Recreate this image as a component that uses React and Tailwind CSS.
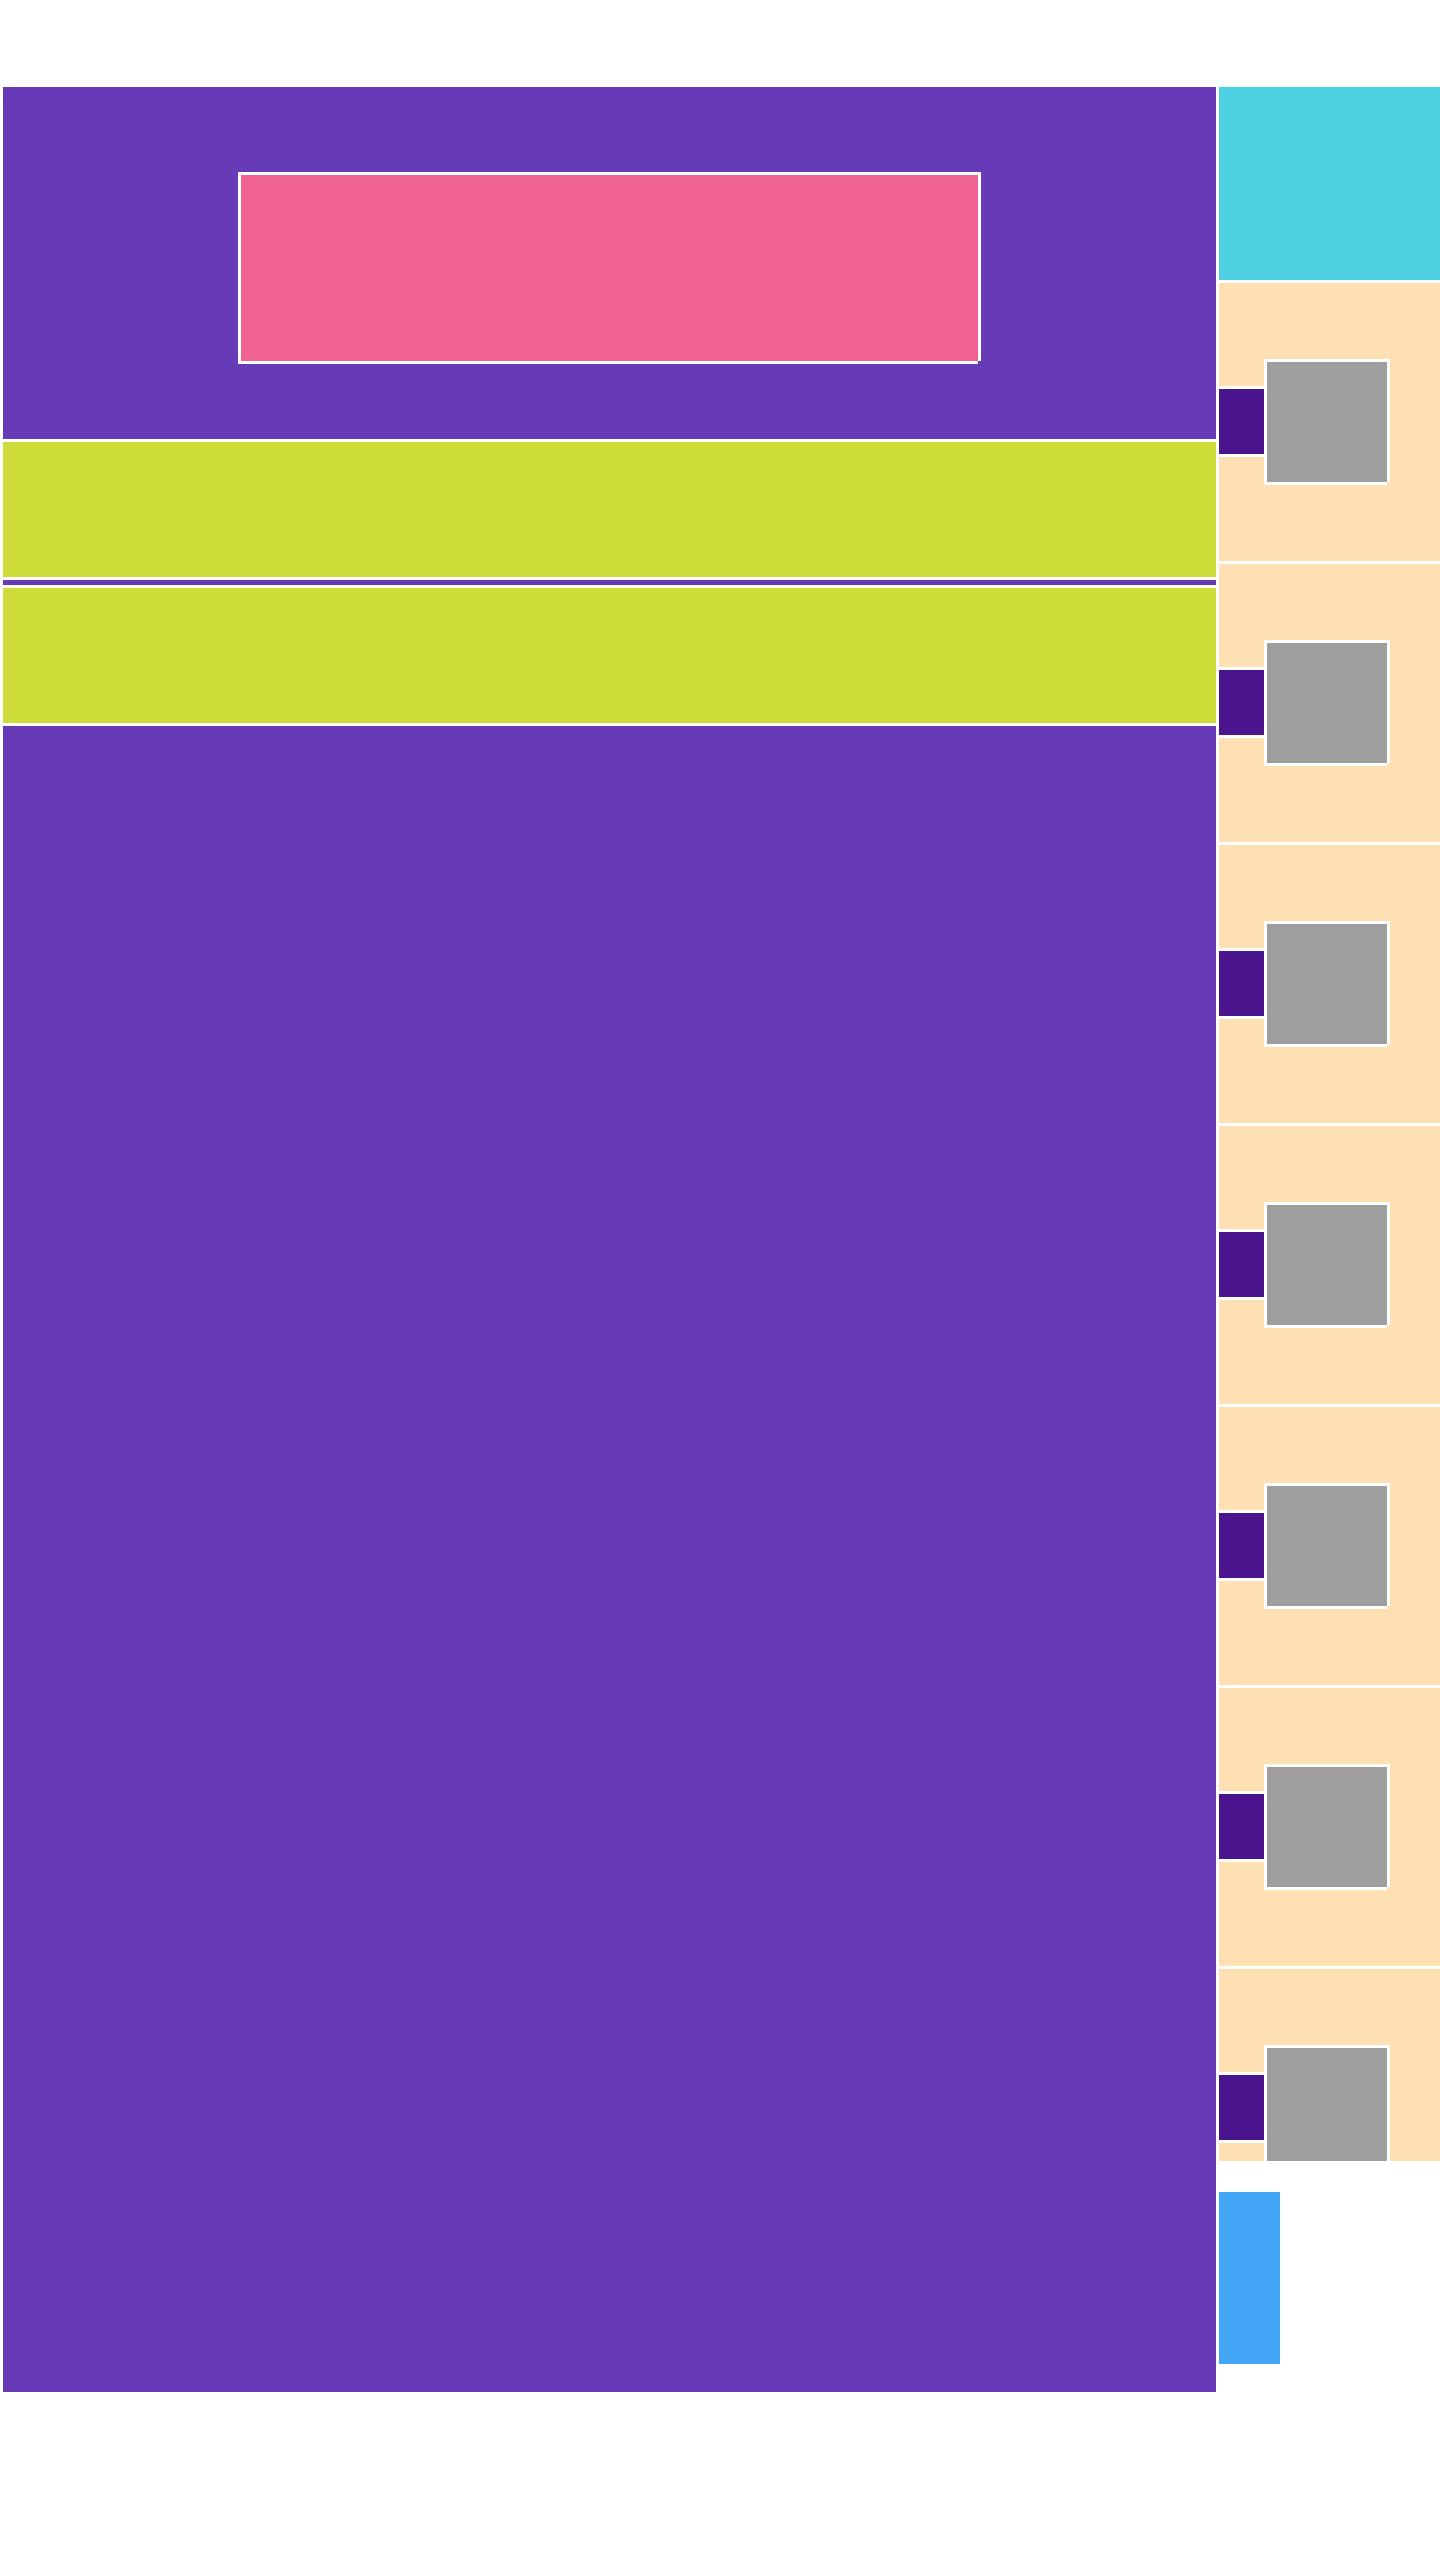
export default function App() {
  const cards = Array.from({ length: 7 });
  return (
    <div className="w-[1440px] min-h-[2560px] bg-white overflow-hidden">
      <div className="flex gap-[3px] pt-[87px] pl-[3px]">
        <div className="w-[1213px] shrink-0 flex flex-col gap-[3px]">
          <div className="h-[352px] bg-[#673ab7] pt-[85px]">
            <div className="ml-[235px] w-[740px] h-[189px] bg-[#f06292] border-l-[3px] border-t-[3px] border-white shadow-[3px_0_0_#ffffff,0_3px_0_#ffffff]" />
          </div>
          <div className="h-[135px] bg-[#cddc39]" />
          <div className="h-[5px] bg-[#673ab7]" />
          <div className="h-[135px] bg-[#cddc39]" />
          <div className="h-[1666px] bg-[#673ab7]" />
        </div>
        <div className="w-[221px] shrink-0 flex flex-col">
          <div className="h-[193px] bg-[#4dd0e1]" />
          <div className="mt-[3px] h-[1878px] overflow-hidden flex flex-col gap-[3px]">
            {cards.map((_, i) => (
              <div key={i} className="h-[278px] shrink-0 bg-[#ffe0b2] flex items-start">
                <div className="mt-[103px] w-[45px] h-[71px] shrink-0 bg-[#4a148c] border-y-[3px] border-white" />
                <div className="mt-[76px] w-[123px] h-[123px] shrink-0 bg-[#9e9e9e] border-l-[3px] border-t-[3px] border-white shadow-[3px_0_0_#ffffff,0_3px_0_#ffffff]" />
              </div>
            ))}
          </div>
          <div className="mt-[31px] w-[61px] h-[172px] bg-[#42a5f5]" />
        </div>
      </div>
    </div>
  );
}
